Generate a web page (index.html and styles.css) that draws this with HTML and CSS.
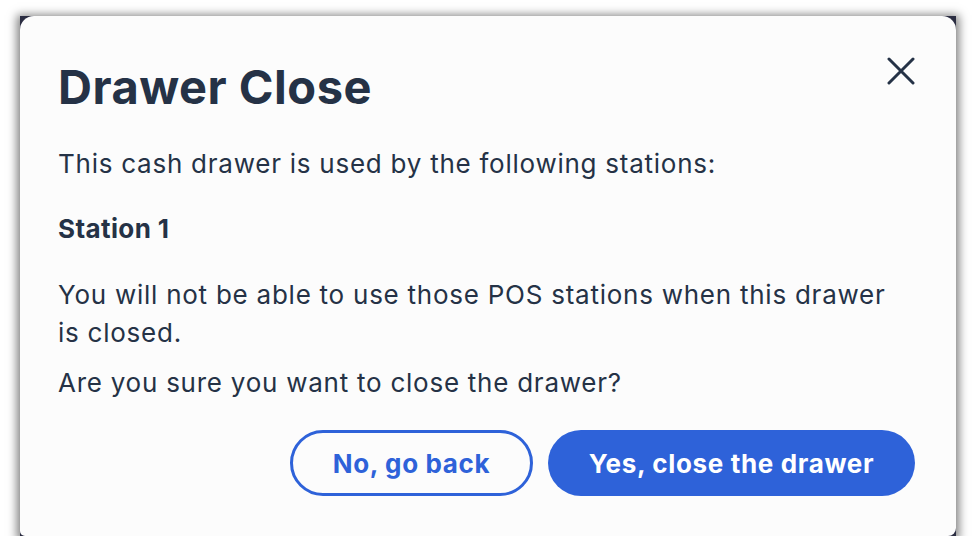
FILE: index.html
```html
<!DOCTYPE html>
<html>
<head>
<meta charset="utf-8">
<link rel="stylesheet" href="styles.css">
</head>
<body>
<div class="frame">
  <div class="dialog">
    <div class="header">
      <h1 class="title">Drawer Close</h1>
      <button class="close" aria-label="Close">
        <svg width="28" height="28" viewBox="0 0 28 28"><path d="M2 2 L26 26 M26 2 L2 26" stroke="#253246" stroke-width="3" stroke-linecap="round"/></svg>
      </button>
    </div>
    <p class="text first">This cash drawer is used by the following stations:</p>
    <p class="text station">Station 1</p>
    <p class="text warn">You will not be able to use those POS stations when this drawer is closed.</p>
    <p class="text ask">Are you sure you want to close the drawer?</p>
    <div class="actions">
      <button class="btn outline">No, go back</button>
      <button class="btn primary">Yes, close the drawer</button>
    </div>
  </div>
</div>
</body>
</html>
```
FILE: styles.css
```css
html, body {
  margin: 0;
  padding: 0;
  background: #ffffff;
}
body {
  font-family: Inter, "Noto Sans", sans-serif;
  color: #253246;
}
.frame {
  margin: 16px 0 0 20px;
  width: 936px;
  height: 520px;
  background: #2b2d42;
  box-shadow: 0 2px 9px 3px rgba(0, 0, 0, 0.5);
}
.dialog {
  height: 100%;
  box-sizing: border-box;
  background: #fcfcfc;
  border-radius: 14px 14px 8px 5px;
  padding: 43px 41px 0 38px;
}
.header {
  display: flex;
  justify-content: space-between;
  align-items: flex-start;
}
.title {
  margin: 0;
  font-size: 47px;
  line-height: 56px;
  font-weight: 700;
  letter-spacing: 0.5px;
}
.close {
  border: none;
  background: none;
  padding: 0;
  margin: -2px 0 0 0;
  width: 28px;
  height: 28px;
  display: flex;
  align-items: center;
  justify-content: center;
}
.text {
  margin: 0;
  font-size: 26px;
  line-height: 38px;
  letter-spacing: 0.75px;
}
.first { margin-top: 30px; }
.station { margin-top: 27px; font-weight: 700; letter-spacing: 0.4px; }
.warn { margin-top: 28px; width: 850px; }
.ask { margin-top: 12px; }
.actions {
  display: flex;
  justify-content: flex-end;
  gap: 15px;
  margin-top: 28px;
}
.btn {
  font-family: Inter, "Noto Sans", sans-serif;
  font-size: 26px;
  font-weight: 700;
  letter-spacing: 0.65px;
  height: 66px;
  border-radius: 33px;
  box-sizing: border-box;
  cursor: pointer;
}
.outline {
  width: 243px;
  background: #fcfcfc;
  border: 3px solid #2e62d9;
  color: #2e62d9;
}
.primary {
  width: 367px;
  background: #2e62d9;
  border: none;
  color: #ffffff;
}
```
